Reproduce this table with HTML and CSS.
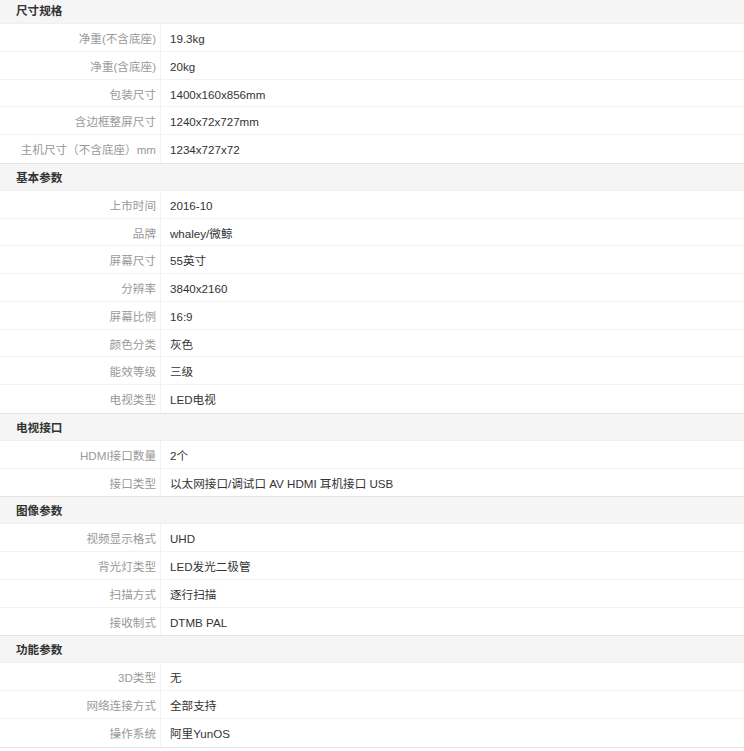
FILE: index.html
```html
<!DOCTYPE html>
<html lang="zh-CN">
<head>
    <meta charset="UTF-8">
    <meta name="viewport" content="width=device-width, initial-scale=1.0">
    <title>规格参数</title>
    <link rel="stylesheet" href="styles.css">
</head>
<body>
    <div class="spec">
        <div class="group">
            <div class="group-title">尺寸规格</div>
            <div class="row"><span class="label">净重(不含底座)</span><span class="value">19.3kg</span></div>
            <div class="row"><span class="label">净重(含底座)</span><span class="value">20kg</span></div>
            <div class="row"><span class="label">包装尺寸</span><span class="value">1400x160x856mm</span></div>
            <div class="row"><span class="label">含边框整屏尺寸</span><span class="value">1240x72x727mm</span></div>
            <div class="row"><span class="label">主机尺寸（不含底座）mm</span><span class="value">1234x727x72</span></div>
        </div>

        <div class="group">
            <div class="group-title">基本参数</div>
            <div class="row"><span class="label">上市时间</span><span class="value">2016-10</span></div>
            <div class="row"><span class="label">品牌</span><span class="value">whaley/微鲸</span></div>
            <div class="row"><span class="label">屏幕尺寸</span><span class="value">55英寸</span></div>
            <div class="row"><span class="label">分辨率</span><span class="value">3840x2160</span></div>
            <div class="row"><span class="label">屏幕比例</span><span class="value">16:9</span></div>
            <div class="row"><span class="label">颜色分类</span><span class="value">灰色</span></div>
            <div class="row"><span class="label">能效等级</span><span class="value">三级</span></div>
            <div class="row"><span class="label">电视类型</span><span class="value">LED电视</span></div>
        </div>

        <div class="group">
            <div class="group-title">电视接口</div>
            <div class="row"><span class="label">HDMI接口数量</span><span class="value">2个</span></div>
            <div class="row"><span class="label">接口类型</span><span class="value">以太网接口/调试口 AV HDMI 耳机接口 USB</span></div>
        </div>

        <div class="group">
            <div class="group-title">图像参数</div>
            <div class="row"><span class="label">视频显示格式</span><span class="value">UHD</span></div>
            <div class="row"><span class="label">背光灯类型</span><span class="value">LED发光二极管</span></div>
            <div class="row"><span class="label">扫描方式</span><span class="value">逐行扫描</span></div>
            <div class="row"><span class="label">接收制式</span><span class="value">DTMB PAL</span></div>
        </div>

        <div class="group">
            <div class="group-title">功能参数</div>
            <div class="row"><span class="label">3D类型</span><span class="value">无</span></div>
            <div class="row"><span class="label">网络连接方式</span><span class="value">全部支持</span></div>
            <div class="row"><span class="label">操作系统</span><span class="value">阿里YunOS</span></div>
        </div>
    </div>
</body>
</html>
```

FILE: styles.css
```css
* { margin: 0; padding: 0; box-sizing: border-box; }
body {
    font-family: 'Liberation Sans', 'Noto Sans CJK SC', sans-serif;
    font-size: 11.6px;
    color: #333;
    background: #fff;
}
.spec {
    margin-top: -4px;
    border-bottom: 1px solid #e6e6e6;
}
.group-title {
    height: 28px;
    line-height: 27px;
    padding-left: 16px;
    background: #f5f5f5;
    border-top: 1px solid #e4e4e4;
    border-bottom: 1px solid #f0f0f0;
    font-weight: bold;
    color: #333;
}
.row {
    display: grid;
    grid-template-columns: 161px 1fr;
    height: 27.75px;
    line-height: 23.75px;
    border-bottom: 1px solid #f2f2f2;
}
.row:last-child { border-bottom: none; }
.label,
.value {
    padding-top: 3px;
    white-space: nowrap;
}
.label {
    text-align: right;
    padding-right: 4px;
    color: #999;
    border-right: 1px solid #f2f2f2;
}
.value {
    padding-left: 9px;
    color: #333;
}
```
